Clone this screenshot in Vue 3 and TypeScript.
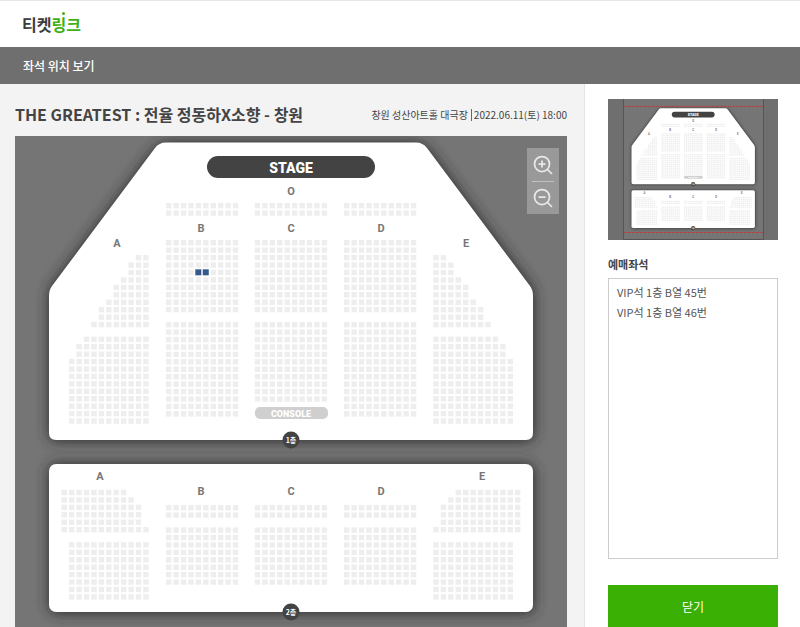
<script setup lang="ts">
import { computed, ref } from 'vue'

interface Block {
  x: number
  y: number
  cols: number
  rows: number[]
  align?: 'left' | 'right'
}

interface Seat {
  x: number
  y: number
}

interface Label {
  text: string
  x: number
  y: number
}

const PITCH = 7.43
const fill = (count: number, size: number): number[] => Array.from({ length: count }, () => size)

const wing = [2, 3, 3, 4, 5, 5, 6, 7, 7, 8]
const lowerWing = [9, 10, 10, ...fill(9, 11)]
const balconyWing = [9, 10, 11, 11, 11, 12]
const centerColumns = [166, 254.8, 344]

const blocks: Block[] = [
  ...centerColumns.map((x) => ({ x, y: 203, cols: 10, rows: fill(2, 10) })),
  ...centerColumns.map((x) => ({ x, y: 240, cols: 10, rows: fill(10, 10) })),
  ...centerColumns.map((x, i) => ({ x, y: 322, cols: 10, rows: fill(i === 1 ? 11 : 13, 10) })),
  { x: 69, y: 255, cols: 11, rows: wing, align: 'right' },
  { x: 69, y: 336.6, cols: 11, rows: lowerWing, align: 'right' },
  { x: 433.3, y: 255, cols: 11, rows: wing },
  { x: 433.3, y: 336.6, cols: 11, rows: lowerWing },
  { x: 61.5, y: 489.8, cols: 12, rows: balconyWing },
  { x: 433.3, y: 489.8, cols: 12, rows: balconyWing, align: 'right' },
  { x: 69, y: 542.2, cols: 11, rows: fill(8, 11) },
  { x: 433.3, y: 542.2, cols: 11, rows: fill(8, 11) },
  ...centerColumns.map((x) => ({ x, y: 505, cols: 10, rows: fill(2, 10) })),
  ...centerColumns.map((x) => ({ x, y: 527.4, cols: 10, rows: fill(8, 10) })),
]

const seats: Seat[] = blocks.flatMap((block) =>
  block.rows.flatMap((count, r) => {
    const offset = block.align === 'right' ? block.cols - count : 0
    return Array.from({ length: count }, (_, c) => ({
      x: block.x + (offset + c) * PITCH,
      y: block.y + r * PITCH,
    }))
  }),
)

// Booked seats sit in the upper block of section B, fifth row.
const taken: Seat[] = [4, 5].map((c) => ({ x: 166 + c * PITCH - 0.4, y: 240 + 4 * PITCH - 0.4 }))

const labels: Label[] = [
  { text: 'O', x: 291, y: 195 },
  { text: 'B', x: 201, y: 232 },
  { text: 'C', x: 291, y: 232 },
  { text: 'D', x: 381, y: 232 },
  { text: 'A', x: 117, y: 247 },
  { text: 'E', x: 466, y: 247 },
  { text: 'A', x: 100, y: 480 },
  { text: 'B', x: 201, y: 495 },
  { text: 'C', x: 291, y: 495 },
  { text: 'D', x: 381, y: 495 },
  { text: 'E', x: 482, y: 480 },
]

const bookedSeats = ['VIP석 1층 B열 45번', 'VIP석 1층 B열 46번']

const zoom = ref(1)
const viewBox = computed(() => {
  const w = 552 / zoom.value
  const h = 491 / zoom.value
  return `${15 + (552 - w) / 2} 136 ${w} ${h}`
})

function zoomIn() {
  zoom.value = Math.min(3, zoom.value * 1.25)
}

function zoomOut() {
  zoom.value = Math.max(1, zoom.value / 1.25)
}

function closeWindow() {
  window.close()
}
</script>

<template>
  <div class="page">
    <header class="top">
      <a class="logo" href="#"><span>티켓</span><span class="accent">링크</span></a>
    </header>
    <h1 class="bar">좌석 위치 보기</h1>
    <div class="body">
      <main class="main">
        <div class="heading">
          <h2 class="title">THE GREATEST : 전율 정동하X소향 - 창원</h2>
          <p class="info">
            <span>창원 성산아트홀 대극장</span>
            <span class="date">2022.06.11(토) 18:00</span>
          </p>
        </div>
        <div class="map">
          <svg class="plan" :viewBox="viewBox" preserveAspectRatio="xMidYMin slice">
            <defs>
              <filter id="glow" x="-10%" y="-15%" width="120%" height="130%">
                <feGaussianBlur stdDeviation="7" />
              </filter>
              <g id="venue">
                <g class="shade" filter="url(#glow)">
                  <path d="M169 143H414Q423 143 428 149L530 285Q534 290 534 296V433Q534 441 526 441H57Q49 441 49 433V296Q49 290 53 285L155 149Q160 143 169 143Z" />
                  <rect x="49" y="464" width="485" height="149" rx="7" />
                </g>
                <path class="floor" d="M166 142.500H416Q423 142.500 427 148L530 286Q533 290 533 296V433Q533 440 526 440H56Q49 440 49 433V296Q49 290 52 286L155 148Q159 142.500 166 142.500Z" />
                <rect class="floor" x="49" y="464" width="484" height="148" rx="7" />
                <rect class="stage" x="207" y="156" width="168" height="22" rx="11" />
                <text class="stage-text" x="291" y="173">STAGE</text>
                <rect v-for="(seat, i) in seats" :key="i" class="seat" :x="seat.x" :y="seat.y" width="5.400" height="5.400" />
                <text v-for="(label, i) in labels" :key="'l' + i" class="label" :x="label.x" :y="label.y">{{ label.text }}</text>
                <rect class="console" x="255" y="407" width="73" height="12" rx="5" />
                <text class="console-text" x="291" y="417">CONSOLE</text>
                <circle class="badge" cx="291" cy="440" r="8.500" />
                <text class="badge-text" x="291" y="443">1층</text>
                <circle class="badge" cx="291" cy="612" r="8.500" />
                <text class="badge-text" x="291" y="615">2층</text>
              </g>
            </defs>
            <use href="#venue" />
            <rect v-for="(seat, i) in taken" :key="i" class="taken" :x="seat.x" :y="seat.y" width="6" height="6" />
          </svg>
          <div class="zoom">
            <button type="button" aria-label="확대" @click="zoomIn">
              <svg viewBox="0 0 20 20"><circle cx="9" cy="9" r="7.500" /><path d="M14.500 14.500L19 19M9 5.500V12.500M5.500 9H12.500" /></svg>
            </button>
            <button type="button" aria-label="축소" @click="zoomOut">
              <svg viewBox="0 0 20 20"><circle cx="9" cy="9" r="7.500" /><path d="M14.500 14.500L19 19M5.500 9H12.500" /></svg>
            </button>
          </div>
        </div>
      </main>
      <aside class="side">
        <svg class="mini" viewBox="0 0 170 141">
          <rect class="mini-area" x="15.500" y="0" width="140" height="141" />
          <use href="#venue" transform="translate(11 -27) scale(0.255)" />
          <path class="mini-edge" d="M15.500 0V141M155.500 0V141M16 140.500H155" />
          <path class="mini-range" d="M16 7.500H155M16 133.500H155" />
        </svg>
        <h3 class="caption">예매좌석</h3>
        <ul class="list">
          <li v-for="seat in bookedSeats" :key="seat">{{ seat }}</li>
        </ul>
        <button class="close" type="button" @click="closeWindow">닫기</button>
      </aside>
    </div>
  </div>
</template>

<style>
body {
  margin: 0;
}
</style>

<style scoped>
.page {
  display: flex;
  flex-direction: column;
  box-sizing: border-box;
  height: 100vh;
  min-height: 480px;
  border-top: 1px solid #e6e8e8;
  background: #f3f3f3;
  color: #444;
  font-family: "Noto Sans CJK KR", "Noto Sans", sans-serif;
  overflow: hidden;
}

.top {
  display: flex;
  align-items: center;
  height: 46px;
  padding: 0 22px;
  background: #fff;
}

.logo {
  position: relative;
  color: #3c3c3c;
  font-size: 16px;
  font-weight: 700;
  line-height: 24px;
  text-decoration: none;
}

.accent {
  color: #3fb011;
}

.logo::after {
  content: "";
  position: absolute;
  top: 0;
  left: 40px;
  width: 3px;
  height: 3px;
  border-radius: 50%;
  background: #3fb011;
}

.bar {
  margin: 0;
  padding: 0 23px;
  background: #6f6f6f;
  color: #fff;
  font-size: 12px;
  font-weight: 500;
  line-height: 37px;
}

.body {
  display: flex;
  flex: 1;
  min-height: 0;
}

.main {
  display: flex;
  flex: 1;
  flex-direction: column;
  min-width: 0;
  padding: 0 17px 0 15px;
}

.heading {
  display: flex;
  align-items: center;
  justify-content: space-between;
  height: 52px;
  white-space: nowrap;
}

.title {
  margin: 0;
  padding-top: 8px;
  font-size: 16px;
  font-weight: 700;
  line-height: 24px;
}

.info {
  display: flex;
  margin: 0;
  padding-top: 10px;
  font-size: 10px;
  line-height: 12px;
}

.date {
  margin-left: 3px;
  padding-left: 2px;
  border-left: 1px solid #666;
}

.map {
  position: relative;
  flex: 1;
  min-height: 0;
  background: #757575;
  overflow: hidden;
}

.plan {
  display: block;
  width: 100%;
  height: 100%;
}

.shade {
  fill: #292929;
}

.floor {
  fill: #fff;
}

.stage,
.badge {
  fill: #434343;
}

.seat {
  fill: #eee;
}

.taken {
  fill: #34598f;
}

.console {
  fill: #cfcfcf;
}

.label,
.stage-text,
.console-text {
  font-family: Roboto, sans-serif;
  font-weight: 700;
  text-anchor: middle;
}

.label {
  fill: #777;
  font-size: 11px;
}

.stage-text {
  fill: #fff;
  font-size: 14px;
  font-weight: 900;
}

.console-text {
  fill: #fff;
  font-size: 9px;
  font-weight: 900;
}

.badge-text {
  fill: #fff;
  font-size: 7px;
  font-weight: 700;
  text-anchor: middle;
}

.zoom {
  position: absolute;
  top: 12px;
  right: 8px;
  display: flex;
  flex-direction: column;
  width: 32px;
  background: #999;
}

.zoom button {
  display: flex;
  align-items: center;
  justify-content: center;
  height: 33px;
  padding: 0;
  border: 0;
  background: none;
}

.zoom button + button {
  margin: 0 5px;
  border-top: 1px solid #c2c2c2;
}

.zoom svg {
  width: 20px;
  height: 20px;
  fill: none;
  stroke: #e8e8e8;
  stroke-width: 1.75;
}

.side {
  display: flex;
  flex-direction: column;
  box-sizing: border-box;
  width: 216px;
  padding: 15px 22px 0 23px;
  border-left: 1px solid #e5e5e5;
  background: #fff;
}

.mini {
  display: block;
  flex: none;
  width: 100%;
  background: #6f6f6f;
}

.mini-area {
  fill: #757575;
}

.mini-edge {
  fill: none;
  stroke: #555;
}

.mini-range {
  fill: none;
  stroke: #a84848;
  stroke-dasharray: 3 1;
}

.caption {
  margin: 16px 0 6px;
  font-size: 11px;
  font-weight: 700;
  line-height: 16px;
}

.list {
  flex: 1;
  margin: 0;
  padding: 3px 8px;
  border: 1px solid #ccc;
  color: #555;
  font-size: 11px;
  line-height: 20px;
  list-style: none;
}

.close {
  height: 42px;
  margin-top: 26px;
  padding: 0;
  border: 0;
  background: #3bb004;
  color: #fff;
  font-family: inherit;
  font-size: 12px;
}
</style>
